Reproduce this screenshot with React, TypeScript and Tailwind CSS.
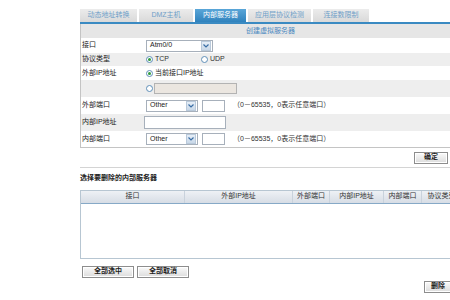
import React from "react";

const font = { fontFamily: '"Liberation Sans", "Noto Sans CJK SC", sans-serif' };

const tabs = [
  { name: "动态地址转换", w: "w-[57px]" },
  { name: "DMZ主机", w: "w-[54px]" },
  { name: "内部服务器", w: "w-[51px]", active: true },
  { name: "应用层协议检测", w: "w-[63px]" },
  { name: "连接数限制", w: "w-[56px]" },
];

const Arrow = () => (
  <span className="flex h-[10px] w-[10px] items-center justify-center border border-[#b9c9da] bg-gradient-to-b from-[#e6eef7] to-[#c9d8e8]">
    <svg width="6" height="4" viewBox="0 0 6 4">
      <path d="M0.5 0.5 L3 3 L5.5 0.5" stroke="#3a6ea5" strokeWidth="1.2" fill="none" />
    </svg>
  </span>
);

const Select = ({ text, w }: { text: string; w: string }) => (
  <div className={`flex h-[12px] ${w} items-center justify-between border border-[#a7b0bb] bg-white pl-[3px] pr-[1px] text-[7px] text-[#222]`}>
    <span>{text}</span>
    <Arrow />
  </div>
);

const Radio = ({ on }: { on?: boolean }) => (
  <span className="flex h-[7px] w-[7px] items-center justify-center rounded-full border border-[#5f8fb8] bg-white">
    {on && <span className="h-[3px] w-[3px] rounded-full bg-[#2f9a3a]" />}
  </span>
);

const Row = ({
  label,
  h,
  gray,
  children,
}: {
  label: string;
  h: string;
  gray?: boolean;
  children?: React.ReactNode;
}) => (
  <div className={`flex ${h} ${gray ? "bg-[#eeeeee]" : "bg-white"}`}>
    <div className="flex w-[63px] items-center pl-[1px] text-[7px] text-[#222]">{label}</div>
    <div className="flex flex-1 items-center gap-[4px] pl-[2px]">{children}</div>
  </div>
);

const Hint = () => (
  <span className="ml-[4px] text-[7px] text-[#333]">（0－65535，0表示任意端口）</span>
);

const Btn = ({ text, w }: { text: string; w: string }) => (
  <div className={`flex h-[12px] ${w} items-center justify-center border border-[#8d8d8d] bg-gradient-to-b from-[#fafafa] to-[#dcdcdc] text-[7px] font-bold text-[#222] shadow-[inset_0_0_0_1px_#fff]`}>
    {text}
  </div>
);

const cols = [
  { name: "接口", w: "w-[103px]" },
  { name: "外部IP地址", w: "w-[108px]" },
  { name: "外部端口", w: "w-[37px]" },
  { name: "内部IP地址", w: "w-[54px]" },
  { name: "内部端口", w: "w-[38px]" },
  { name: "协议类型", w: "w-[40px]" },
];

export default function App() {
  return (
    <div className="h-[300px] w-[450px] overflow-hidden bg-white" style={font}>
      <div className="ml-[80px] w-[380px] pt-[9px]">
        <div className="flex h-[13px] gap-[2px]">
          {tabs.map((t) => (
            <div
              key={t.name}
              className={`flex ${t.w} items-center justify-center text-[7px] ${
                t.active
                  ? "bg-gradient-to-b from-[#5aa6d8] to-[#2f82bd] text-white"
                  : "bg-gradient-to-b from-[#ececec] to-[#d9d9d9] text-[#6f9fc8]"
              }`}
            >
              {t.name}
            </div>
          ))}
        </div>
        <div className="h-[2px] bg-[#3a8ac2]" />

        <div className="border-b border-l border-[#c4c4c4]">
          <div className="flex h-[14px] items-center bg-[#e6e6e6] pl-[165px] text-[7px] text-[#4a88c0]">
            创建虚拟服务器
          </div>
          <Row label="接口" h="h-[15px]">
            <Select text="Atm0/0" w="w-[67px]" />
          </Row>
          <Row label="协议类型" h="h-[13px]" gray>
            <span className="flex w-[51px] items-center gap-[2px] text-[7px] text-[#333]">
              <Radio on />
              TCP
            </span>
            <span className="flex items-center gap-[2px] text-[7px] text-[#333]">
              <Radio />
              UDP
            </span>
          </Row>
          <Row label="外部IP地址" h="h-[14px]">
            <span className="flex items-center gap-[2px] text-[7px] text-[#222]">
              <Radio on />
              当前接口IP地址
            </span>
          </Row>
          <Row label="" h="h-[17px]" gray>
            <span className="flex items-center gap-[1px]">
              <Radio />
              <span className="h-[11px] w-[83px] border border-[#b3b3b3] bg-[#ebe6e0]" />
            </span>
          </Row>
          <Row label="外部端口" h="h-[17px]">
            <Select text="Other" w="w-[52px]" />
            <span className="h-[12px] w-[23px] border border-[#a7b0bb] bg-white" />
            <Hint />
          </Row>
          <Row label="内部IP地址" h="h-[17px]" gray>
            <span className="-ml-[2px] h-[13px] w-[82px] border border-[#a7b0bb] bg-white" />
          </Row>
          <Row label="内部端口" h="h-[16px]">
            <Select text="Other" w="w-[52px]" />
            <span className="h-[12px] w-[23px] border border-[#a7b0bb] bg-white" />
            <Hint />
          </Row>
        </div>

        <div className="flex h-[19px] items-center justify-end pr-[12px]">
          <Btn text="确定" w="w-[34px]" />
        </div>
        <div className="h-[1px] bg-[#d4d4d4]" />
        <div className="pt-[5px] text-[7px] font-bold text-[#222]">选择要删除的内部服务器</div>

        <div className="mt-[6px] h-[69px] border border-[#b7c6d2]">
          <div className="flex h-[13px] border-b border-[#86a9c7] bg-gradient-to-b from-[#eef1f5] to-[#d7dde5]">
            {cols.map((c, i) => (
              <div
                key={c.name}
                className={`flex ${c.w} shrink-0 items-center justify-center whitespace-nowrap text-[7px] text-[#333] ${
                  i > 0 ? "border-l border-[#c9d2dc]" : ""
                }`}
              >
                {c.name}
              </div>
            ))}
          </div>
        </div>

        <div className="mt-[7px] flex gap-[3px] pl-[2px]">
          <Btn text="全部选中" w="w-[52px]" />
          <Btn text="全部取消" w="w-[52px]" />
        </div>
        <div className="mt-[3px] flex justify-start pl-[344px]">
          <Btn text="删除" w="w-[28px]" />
        </div>
      </div>
    </div>
  );
}
